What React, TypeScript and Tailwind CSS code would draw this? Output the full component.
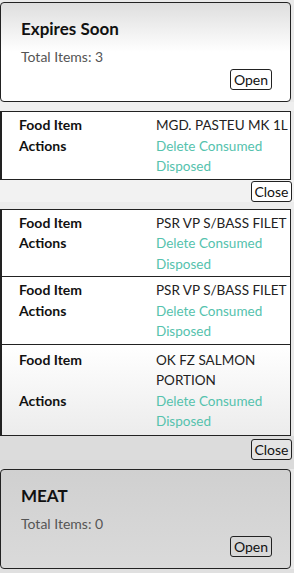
import React from "react";

const font = { fontFamily: 'Lato, "Noto Sans", "Liberation Sans", sans-serif' };

function Row({ name, nameW, extra }: { name: string; nameW?: string; extra?: boolean }) {
  return (
    <div
      className={`grid grid-cols-[137px_1fr] pl-[17px] ${extra ? "pt-[5px] pb-[3px]" : "pt-[3px] pb-[2px]"} text-[14px] leading-[20.5px]`}
    >
      <div className="font-bold text-[#111]">Food Item</div>
      <div className={`text-[#222] text-[13.5px] ${nameW ?? "whitespace-nowrap"}`}>{name}</div>
      <div className="font-bold text-[#111]">Actions</div>
      <div className="text-[#55c2ad] text-[13.5px]">
        <div>Delete Consumed</div>
        <div>Disposed</div>
      </div>
    </div>
  );
}

function Summary({ title, count, gray }: { title: string; count: number; gray?: boolean }) {
  return (
    <div
      className={`w-[291px] h-[100px] border-[1.5px] border-[#222] rounded-[4px] pl-[20px] pt-[16px] flex flex-col ${
        gray ? "bg-gradient-to-b from-[#d0d0d0] to-[#dadada]" : "bg-gradient-to-b from-[#dedede] via-white to-white"
      }`}
    >
      <div className="text-[17px] font-bold text-[#111] leading-[20px]">{title}</div>
      <div className="text-[14px] text-[#555] mt-[9px] leading-[18px]">Total Items: {count}</div>
      <div className="flex justify-end pr-[18px] mt-[3px]">
        <button className="h-[21px] w-[42px] border-[1.5px] border-[#222] rounded-[3px] text-[14px] leading-[17px] text-[#111] bg-transparent">
          Open
        </button>
      </div>
    </div>
  );
}

function Close({ bg, btnBg, pt }: { bg: string; btnBg: string; pt: string }) {
  return (
    <div className={`flex justify-end pr-[2px] ${pt} ${bg}`}>
      <button
        className={`h-[21px] w-[41px] border-[1.5px] border-[#222] rounded-[3px] text-[14px] leading-[17px] text-[#111] ${btnBg}`}
      >
        Close
      </button>
    </div>
  );
}

export default function App() {
  return (
    <div className="w-[294px] h-[573px] overflow-hidden bg-[#e9e9e9] pt-[2px]" style={font}>
      <Summary title="Expires Soon" count={3} />
      <div className="h-[9px] bg-[#efefef]" />
      <div className="w-[291px] bg-white border-[1.5px] border-l-2 border-[#222]">
        <Row name="MGD. PASTEU MK 1L" />
      </div>
      <Close bg="bg-[#f2f2f2]" btnBg="bg-white" pt="pt-[1px]" />
      <div className="h-[7px] bg-[#ececec]" />
      <div className="w-[291px] bg-white border-[1.5px] border-l-2 border-[#222]">
        <Row name="PSR VP S/BASS FILET" />
      </div>
      <div className="w-[291px] bg-white border-[1.5px] border-t-0 border-l-2 border-[#222]">
        <Row name="PSR VP S/BASS FILET" />
      </div>
      <div className="w-[291px] bg-gradient-to-b from-white to-[#ececec] border-[1.5px] border-t-0 border-l-2 border-[#222]">
        <Row name="OK FZ SALMON PORTION" nameW="w-[100px]" extra />
      </div>
      <Close bg="bg-[#dcdcdc]" btnBg="bg-[#e4e4e4]" pt="pt-[3px]" />
      <div className="h-[9px] bg-[#dadada]" />
      <Summary title="MEAT" count={0} gray />
      <div className="h-[10px] bg-[#e0e0e0]" />
    </div>
  );
}
